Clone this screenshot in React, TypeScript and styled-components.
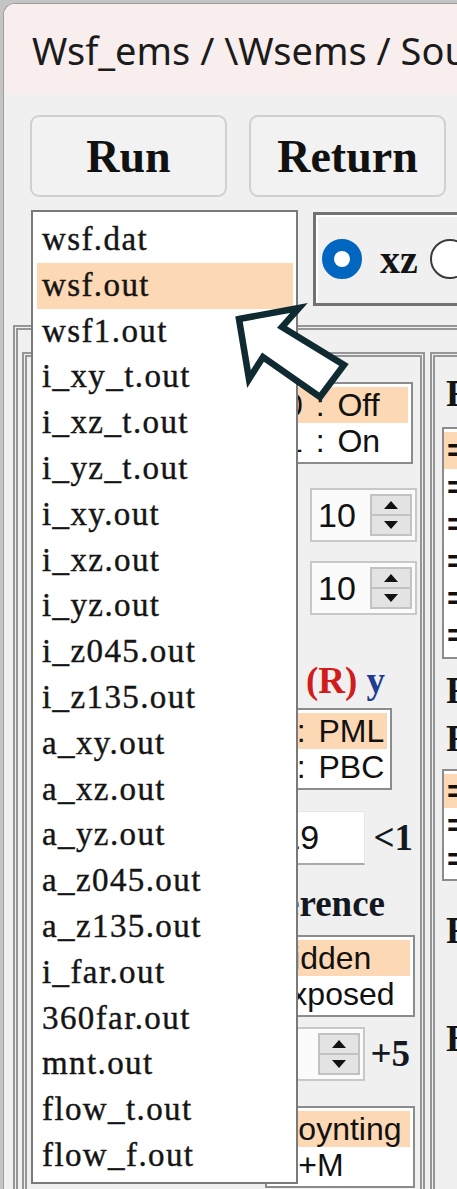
import styled, { createGlobalStyle } from "styled-components"

const GlobalStyle = createGlobalStyle`
  html, body {
    margin: 0;
    padding: 0;
  }
  body {
    width: 457px;
    height: 1189px;
    overflow: hidden;
    background: #c4c4c4;
  }
`

const files = [
    "wsf.dat", "wsf.out", "wsf1.out", "i_xy_t.out", "i_xz_t.out", "i_yz_t.out",
    "i_xy.out", "i_xz.out", "i_yz.out", "i_z045.out", "i_z135.out", "a_xy.out",
    "a_xz.out", "a_yz.out", "a_z045.out", "a_z135.out", "i_far.out", "360far.out",
    "mnt.out", "flow_t.out", "flow_f.out",
]

function SpinButtons() {
    return (
        <SpinBtns>
            <SpinHalf>
                <svg width="14" height="8" viewBox="0 0 14 8"><polygon points="7,0 14,8 0,8" fill="#111" /></svg>
            </SpinHalf>
            <SpinHalf>
                <svg width="14" height="8" viewBox="0 0 14 8"><polygon points="0,0 14,0 7,8" fill="#111" /></svg>
            </SpinHalf>
        </SpinBtns>
    )
}

export default function App() {
    return (
        <>
            <GlobalStyle />
            <Window>
                <TitleBar>Wsf_ems / \Wsems / Source / output</TitleBar>

                <ButtonRow>
                    <Button>Run</Button>
                    <Button>Return</Button>
                </ButtonRow>

                <TopRow>
                    <RadioBox>
                        <Radio checked />
                        <RadioLabel>xz</RadioLabel>
                        <Radio />
                        <RadioLabel>yz</RadioLabel>
                    </RadioBox>
                </TopRow>

                <OuterGroup>
                    <GroupRow>
                        <MiddleGroup>
                            <Row $mt={25} $mr={7}>
                                <SmallList $w={163} $pad={33}>
                                    <SmallItem $selected>0 : Off</SmallItem>
                                    <SmallItem>1 : On</SmallItem>
                                </SmallList>
                            </Row>
                            <Row $mt={24} $mr={3}>
                                <SpinBox $w={107}>10<SpinButtons /></SpinBox>
                            </Row>
                            <Row $mt={19} $mr={3}>
                                <SpinBox $w={107}>10<SpinButtons /></SpinBox>
                            </Row>
                            <Row $mt={46} $mr={35}>
                                <Label>Wall <Red>(R)</Red> <Blue>y</Blue></Label>
                            </Row>
                            <Row $mt={7} $mr={28}>
                                <SmallList $w={129} $pad={1}>
                                    <SmallItem $selected>0 : PML</SmallItem>
                                    <SmallItem>1 : PBC</SmallItem>
                                </SmallList>
                            </Row>
                            <Row $mt={21} $mr={7} $gap={8}>
                                <TextInput>19</TextInput>
                                <Label>&lt;1</Label>
                            </Row>
                            <Row $mt={19} $mr={35}>
                                <Label>Reference</Label>
                            </Row>
                            <Row $mt={11} $mr={5}>
                                <SmallList $w={150} $pad={3}>
                                    <SmallItem $selected>Hidden</SmallItem>
                                    <SmallItem>Exposed</SmallItem>
                                </SmallList>
                            </Row>
                            <Row $mt={10} $mr={10} $gap={5}>
                                <SpinBox $w={120}>0<SpinButtons /></SpinBox>
                                <Label>+5</Label>
                            </Row>
                            <Row $mt={25} $mr={5}>
                                <SmallList $w={150} $pad={10}>
                                    <SmallItem $selected>Poynting</SmallItem>
                                    <SmallItem>E+M</SmallItem>
                                </SmallList>
                            </Row>
                        </MiddleGroup>

                        <RightGroup>
                            <SideLabel $mt={22}>Field</SideLabel>
                            <SideList $mt={18}>
                                {["= Ex", "= Ey", "= Ez", "= Hx", "= Hy", "= Hz"].map((t, i) => (
                                    <SideItem key={t} $rowH={37} $selected={i === 0}>{t}</SideItem>
                                ))}
                            </SideList>
                            <SideLabel $mt={17}>Fill</SideLabel>
                            <SideLabel $mt={18}>Fix</SideLabel>
                            <SideList $mt={15}>
                                {["= 0", "= 1", "= 2"].map((t, i) => (
                                    <SideItem key={t} $rowH={34} $selected={i === 0}>{t}</SideItem>
                                ))}
                            </SideList>
                            <SideLabel $mt={35}>Frame</SideLabel>
                            <SideLabel $mt={78}>Export</SideLabel>
                        </RightGroup>
                    </GroupRow>
                </OuterGroup>

                <Dropdown>
                    {files.map((f, i) => (
                        <FileItem key={f} $selected={i === 1}>{f}</FileItem>
                    ))}
                </Dropdown>

                <Pointer width="125" height="105" viewBox="0 0 125 105">
                    <polygon
                        points="9,19 69,8 52,27 114,65 90,97 33,57 19,79"
                        fill="#ffffff"
                        stroke="#102a31"
                        strokeWidth="6.5"
                        strokeLinejoin="miter"
                    />
                </Pointer>
            </Window>
        </>
    )
}

const Window = styled.div`
    position: relative;
    margin: 3px 0 0 3px;
    height: 1185px;
    overflow: hidden;
    background: #f0f0f0;
    border-top: 1px solid #9c9c9c;
    border-left: 1px solid #9c9c9c;
    border-top-left-radius: 12px;
`

const TitleBar = styled.div`
    height: 91px;
    box-sizing: border-box;
    padding: 22px 0 0 28px;
    background: #f8eeee;
    font-family: 'Noto Sans', sans-serif;
    font-size: 38px;
    line-height: 48px;
    color: #1b1b1b;
    white-space: nowrap;
`

const ButtonRow = styled.div`
    display: flex;
    gap: 22px;
    margin-top: 20px;
    padding-left: 26px;
`

const Button = styled.div`
    width: 197px;
    height: 82px;
    box-sizing: border-box;
    display: flex;
    align-items: center;
    justify-content: center;
    border: 2px solid #d0d0d0;
    border-radius: 9px;
    background: #f2f2f2;
    font-family: 'Liberation Serif', serif;
    font-weight: 700;
    font-size: 46px;
    color: #111;
`

const TopRow = styled.div`
    display: flex;
    margin-top: 15px;
    height: 94px;
    padding-left: 309px;
`

const RadioBox = styled.div`
    display: flex;
    align-items: center;
    flex: none;
    width: 220px;
    box-sizing: border-box;
    border: 3px solid #727272;
    box-shadow: inset 2px 2px 0 #ffffff;
    padding-left: 6px;
`

const Radio = styled.span<{ checked?: boolean }>`
    flex: none;
    width: 40px;
    height: 40px;
    box-sizing: border-box;
    border-radius: 50%;
    background: #fff;
    border: ${props => props.checked ? '12px solid #0066bf' : '2px solid #3a3a3a'};
`

const RadioLabel = styled.span`
    margin: 0 12px 0 18px;
    font-family: 'Liberation Serif', serif;
    font-weight: 700;
    font-size: 40px;
    color: #141414;
`

const OuterGroup = styled.div`
    margin: 19px 0 0 9px;
    width: 500px;
    height: 900px;
    border: 5px double #969696;
`

const GroupRow = styled.div`
    display: flex;
    gap: 5px;
    margin: 22px 0 0 4px;
`

const MiddleGroup = styled.div`
    display: flex;
    flex-direction: column;
    width: 403px;
    height: 900px;
    box-sizing: border-box;
    border: 5px double #969696;
`

const RightGroup = styled.div`
    display: flex;
    flex-direction: column;
    align-items: flex-start;
    width: 80px;
    height: 900px;
    box-sizing: border-box;
    border: 5px double #969696;
    padding-left: 7px;
`

const Row = styled.div<{ $mt: number; $mr: number; $gap?: number }>`
    display: flex;
    align-items: center;
    justify-content: flex-end;
    gap: ${props => props.$gap ?? 0}px;
    margin-top: ${props => props.$mt}px;
    margin-right: ${props => props.$mr}px;
`

const SmallList = styled.div<{ $w: number; $pad: number }>`
    width: ${props => props.$w}px;
    box-sizing: border-box;
    padding: 3px 3px 3px 0;
    border: 2px solid #8c8c8c;
    background: #fff;

    & > div {
        padding-left: ${props => props.$pad}px;
    }
`

const SmallItem = styled.div<{ $selected?: boolean }>`
    height: 36px;
    line-height: 36px;
    font-family: 'Liberation Sans', sans-serif;
    font-size: 32px;
    word-spacing: 4px;
    color: #111;
    white-space: nowrap;
    background: ${props => props.$selected ? '#fcd8b4' : 'transparent'};
`

const SpinBox = styled.div<{ $w: number }>`
    display: flex;
    align-items: center;
    width: ${props => props.$w}px;
    height: 54px;
    box-sizing: border-box;
    padding-left: 6px;
    border: 2px solid #c8c8c8;
    background: #fbfbfb;
    font-family: 'Liberation Sans', sans-serif;
    font-size: 34px;
    color: #111;
`

const SpinBtns = styled.div`
    display: flex;
    flex-direction: column;
    margin-left: auto;
    margin-right: 3px;
    width: 42px;
    height: 42px;
    box-sizing: border-box;
    border: 2px solid #c2c2c2;
    background: #e3e3e3;
`

const SpinHalf = styled.div`
    flex: 1;
    display: flex;
    align-items: center;
    justify-content: center;
    & + & {
        border-top: 2px solid #c2c2c2;
    }
`

const TextInput = styled.div`
    width: 86px;
    height: 54px;
    box-sizing: border-box;
    padding-left: 1px;
    display: flex;
    align-items: center;
    background: #fff;
    border: 1px solid #e6e6e6;
    border-bottom: 2px solid #a9a9a9;
    font-family: 'Liberation Sans', sans-serif;
    font-size: 34px;
    color: #111;
`

const Label = styled.span`
    font-family: 'Liberation Serif', serif;
    font-weight: 700;
    font-size: 37px;
    line-height: 40px;
    color: #141821;
    white-space: nowrap;
`

const Red = styled.span`
    color: #d21c1c;
`

const Blue = styled.span`
    color: #1c3d91;
`

const SideLabel = styled.div<{ $mt: number }>`
    margin-top: ${props => props.$mt}px;
    margin-left: 4px;
    font-family: 'Liberation Serif', serif;
    font-weight: 700;
    font-size: 37px;
    line-height: 30px;
    color: #141414;
    white-space: nowrap;
`

const SideList = styled.div<{ $mt: number }>`
    margin-top: ${props => props.$mt}px;
    width: 120px;
    box-sizing: border-box;
    padding: 3px 0;
    border: 2px solid #8c8c8c;
    background: #fff;
`

const SideItem = styled.div<{ $rowH: number; $selected?: boolean }>`
    height: ${props => props.$rowH}px;
    line-height: ${props => props.$rowH}px;
    padding-left: 3px;
    font-family: 'Liberation Sans', sans-serif;
    font-weight: 700;
    font-size: 32px;
    color: #111;
    white-space: nowrap;
    background: ${props => props.$selected ? '#fcd8b4' : 'transparent'};
`

const Dropdown = styled.div`
    position: absolute;
    left: 27px;
    top: 206px;
    width: 267px;
    height: 974px;
    box-sizing: border-box;
    padding: 5px 3px 0 4px;
    border: 2px solid #7a7a7a;
    background: #fff;
`

const FileItem = styled.div<{ $selected?: boolean }>`
    height: 45.8px;
    line-height: 45.8px;
    padding-left: 5px;
    font-family: 'Liberation Serif', serif;
    font-size: 33px;
    letter-spacing: 1.4px;
    -webkit-text-stroke: 0.4px #151515;
    color: #151515;
    white-space: nowrap;
    background: ${props => props.$selected ? '#fcd8b4' : 'transparent'};
`

const Pointer = styled.svg`
    position: absolute;
    left: 226px;
    top: 296px;
    overflow: visible;
`
